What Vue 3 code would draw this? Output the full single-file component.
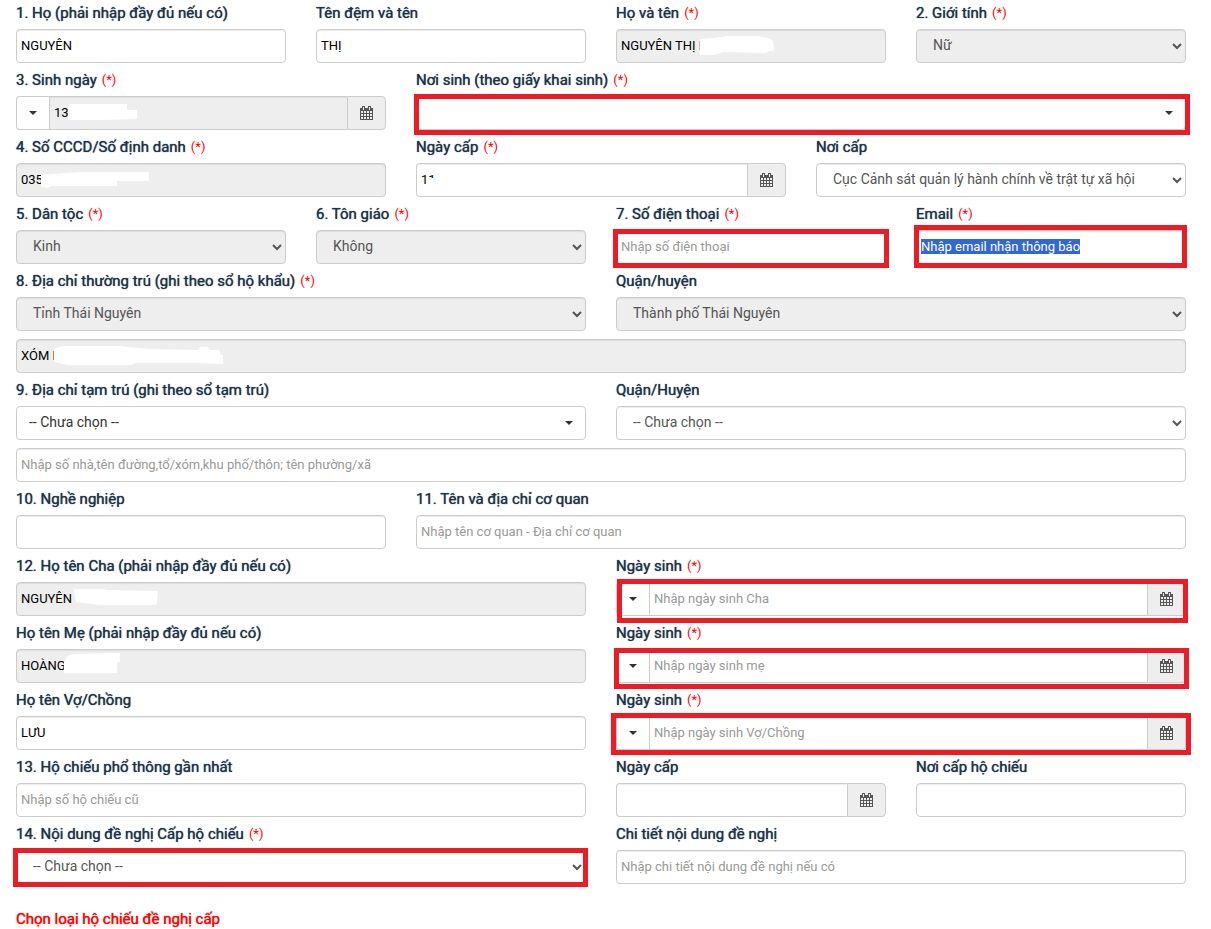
<template>
  <form class="passport-form" @submit.prevent>
    <div v-for="field in fields" :key="field.id" class="field" :class="'span-' + field.span">
      <label v-if="field.label" :for="field.id">
        {{ field.label }}<span v-if="field.required" class="required">(*)</span>
      </label>

      <div class="control">
        <select
          v-if="field.type === 'select'"
          :id="field.id"
          v-model="field.value"
          class="form-control"
          :disabled="field.disabled"
        >
          <option>{{ field.value }}</option>
        </select>

        <div v-else-if="field.type === 'picker'" class="picker">
          <select :id="field.id" v-model="field.value" class="form-control">
            <option>{{ field.value }}</option>
          </select>
          <span class="caret"></span>
        </div>

        <div v-else-if="field.type === 'date'" class="input-group">
          <button v-if="field.format" type="button" class="format-btn" aria-label="Định dạng ngày">
            <span class="caret"></span>
          </button>
          <input
            :id="field.id"
            v-model="field.value"
            type="text"
            class="form-control"
            :class="{ first: !field.format }"
            :placeholder="field.placeholder"
            :disabled="field.disabled"
          />
          <button type="button" class="addon" aria-label="Chọn ngày">
            <svg viewBox="0 0 13 14" width="13" height="14" fill-rule="evenodd">
              <path :d="calendar" />
            </svg>
          </button>
        </div>

        <input
          v-else
          :id="field.id"
          v-model="field.value"
          type="text"
          class="form-control"
          :placeholder="field.placeholder"
          :disabled="field.disabled"
          :aria-label="field.label ? undefined : field.aria"
        />

        <svg v-if="field.mask" class="mask" width="240" height="34" viewBox="0 0 240 34">
          <polygon :points="field.mask" />
        </svg>
        <span v-if="field.frame" class="frame" :class="'frame-' + field.frame"></span>
      </div>
    </div>

    <h2>Chọn loại hộ chiếu đề nghị cấp</h2>
  </form>
</template>

<script setup>
import { ref, onMounted } from 'vue';

// Outline with two rings, then three rows of four day cells
const calendar =
  'M0 2H2V0H5V2H8V0H11V2H13V14H0Z M3 1h1v3h-1z M9 1h1v3h-1z' +
  'M1 5h2v2h-2z M4 5h2v2h-2z M7 5h2v2h-2z M10 5h2v2h-2z' +
  'M1 8h2v2h-2z M4 8h2v2h-2z M7 8h2v2h-2z M10 8h2v2h-2z' +
  'M1 11h2v2h-2z M4 11h2v2h-2z M7 11h2v2h-2z M10 11h2v2h-2z';

// span = number of columns out of 12
const fields = ref([
  { id: 'ho', label: '1. Họ (phải nhập đầy đủ nếu có)', span: 3, value: 'NGUYÊN' },
  { id: 'ten', label: 'Tên đệm và tên', span: 3, value: 'THỊ' },
  { id: 'hoten', label: 'Họ và tên', required: true, span: 3, value: 'NGUYÊN THỊ H', disabled: true, mask: '84,10 98,9 112,7 142,7 152,9 157,12 158,21 148,24 108,23 98,26 84,26' },
  { id: 'gioitinh', label: '2. Giới tính', required: true, span: 3, type: 'select', value: 'Nữ', disabled: true },

  { id: 'ngaysinh', label: '3. Sinh ngày', required: true, span: 4, type: 'date', format: true, value: '13', disabled: true, mask: '52,10 54,8 111,8 111,14 121,14 121,23 86,24 52,24' },
  { id: 'noisinh', label: 'Nơi sinh (theo giấy khai sinh)', required: true, span: 8, type: 'picker', value: '', frame: 'birthplace' },

  { id: 'cccd', label: '4. Số CCCD/Số định danh', required: true, span: 4, value: '035', disabled: true, mask: '25,12 48,10 66,9 133,9 133,18 101,18 101,23 36,23 32,25 25,24' },
  { id: 'ngaycap', label: 'Ngày cấp', required: true, span: 4, type: 'date', value: '11', mask: '13,15 22,15 22,25 13,25' },
  { id: 'noicap', label: 'Nơi cấp', span: 4, type: 'select', value: 'Cục Cảnh sát quản lý hành chính về trật tự xã hội' },

  { id: 'dantoc', label: '5. Dân tộc', required: true, span: 3, type: 'select', value: 'Kinh', disabled: true },
  { id: 'tongiao', label: '6. Tôn giáo', required: true, span: 3, type: 'select', value: 'Không', disabled: true },
  { id: 'dienthoai', label: '7. Số điện thoại', required: true, span: 3, value: '', placeholder: 'Nhập số điện thoại', frame: 'phone' },
  { id: 'email', label: 'Email', required: true, span: 3, value: 'Nhập email nhận thông báo', frame: 'email' },

  { id: 'tinh', label: '8. Địa chỉ thường trú (ghi theo sổ hộ khẩu)', required: true, span: 6, type: 'select', value: 'Tỉnh Thái Nguyên', disabled: true },
  { id: 'huyen', label: 'Quận/huyện', span: 6, type: 'select', value: 'Thành phố Thái Nguyên', disabled: true },
  { id: 'thuongtru', aria: 'Địa chỉ thường trú', span: 12, value: 'XÓM H', disabled: true, mask: '38,10 46,7 102,7 134,10 183,11 184,8 192,8 193,11 203,11 205,16 207,16 207,25 180,24 121,24 115,26 52,26 38,23' },

  { id: 'tamtrutinh', label: '9. Địa chỉ tạm trú (ghi theo sổ tạm trú)', span: 6, type: 'picker', value: '-- Chưa chọn --' },
  { id: 'tamtruhuyen', label: 'Quận/Huyện', span: 6, type: 'select', value: '-- Chưa chọn --' },
  { id: 'tamtru', aria: 'Địa chỉ tạm trú', span: 12, value: '', placeholder: 'Nhập số nhà,tên đường,tổ/xóm,khu phố/thôn; tên phường/xã' },

  { id: 'nghe', label: '10. Nghề nghiệp', span: 4, value: '' },
  { id: 'coquan', label: '11. Tên và địa chỉ cơ quan', span: 8, value: '', placeholder: 'Nhập tên cơ quan - Địa chỉ cơ quan' },

  { id: 'cha', label: '12. Họ tên Cha (phải nhập đầy đủ nếu có)', span: 6, value: 'NGUYÊN', disabled: true, mask: '58,7 88,7 90,8 142,9 141,22 139,23 84,23 60,20' },
  { id: 'sinhcha', label: 'Ngày sinh', required: true, span: 6, type: 'date', format: true, value: '', placeholder: 'Nhập ngày sinh Cha', frame: 'father' },

  { id: 'me', label: 'Họ tên Mẹ (phải nhập đầy đủ nếu có)', span: 6, value: 'HOÀNG', disabled: true, mask: '48,13 51,7 58,5 104,4 104,13 101,13 101,24 48,24' },
  { id: 'sinhme', label: 'Ngày sinh', required: true, span: 6, type: 'date', format: true, value: '', placeholder: 'Nhập ngày sinh mẹ', frame: 'mother' },

  { id: 'vochong', label: 'Họ tên Vợ/Chồng', span: 6, value: 'LƯU' },
  { id: 'sinhvochong', label: 'Ngày sinh', required: true, span: 6, type: 'date', format: true, value: '', placeholder: 'Nhập ngày sinh Vợ/Chồng', frame: 'spouse' },

  { id: 'hochieu', label: '13. Hộ chiếu phổ thông gần nhất', span: 6, value: '', placeholder: 'Nhập số hộ chiếu cũ' },
  { id: 'caphochieu', label: 'Ngày cấp', span: 3, type: 'date', value: '' },
  { id: 'noicaphochieu', label: 'Nơi cấp hộ chiếu', span: 3, value: '' },

  { id: 'noidung', label: '14. Nội dung đề nghị Cấp hộ chiếu', required: true, span: 6, type: 'select', value: '-- Chưa chọn --', frame: 'request' },
  { id: 'chitiet', label: 'Chi tiết nội dung đề nghị', span: 6, value: '', placeholder: 'Nhập chi tiết nội dung đề nghị nếu có' },
]);

onMounted(() => {
  const email = document.getElementById('email');
  email.focus();
  email.select();
});
</script>

<style>
body {
  margin: 0;
  background: #fff;
}
</style>

<style scoped>
.passport-form {
  display: grid;
  grid-template-columns: repeat(12, minmax(0, 1fr));
  column-gap: 30px;
  padding: 3px 25px 0 16px;
  font-family: Roboto, "Noto Sans", sans-serif;
  font-size: 14px;
  line-height: 20px;
}

.span-3 { grid-column: span 3; }
.span-4 { grid-column: span 4; }
.span-6 { grid-column: span 6; }
.span-8 { grid-column: span 8; }
.span-12 { grid-column: span 12; }

.field {
  margin-bottom: 7px;
}

.span-12 {
  margin-top: 1px;
}

label {
  display: flex;
  align-items: center;
  height: 20px;
  margin-bottom: 6px;
  color: #1f3347;
  font-size: 15px;
  font-weight: 400;
  text-shadow: 0 0 1px currentColor;
  white-space: nowrap;
}

.required {
  margin-left: 5px;
  color: #f00;
  font-size: 13px;
  text-shadow: none;
}

.control,
.picker {
  position: relative;
}

.form-control {
  display: block;
  box-sizing: border-box;
  width: 100%;
  height: 34px;
  padding: 5px 4px 7px;
  border: 1px solid #ccc;
  border-radius: 4px;
  outline: none;
  background-color: #fff;
  box-shadow: inset 0 1px 1px rgba(0, 0, 0, 0.075);
  color: #000;
  font-family: inherit;
  font-size: 13px;
}

.form-control:disabled {
  background-color: #eee;
  opacity: 1;
}

.form-control::placeholder {
  color: #999;
}

.form-control::selection {
  background: #3367d1;
  color: #fff;
}

select.form-control {
  padding: 5px 12px 7px;
  color: #555;
  font-size: 14px;
}

.picker .form-control {
  appearance: none;
  box-shadow: none;
  color: #333;
}

.caret {
  border-top: 4px solid #333;
  border-right: 4px solid transparent;
  border-left: 4px solid transparent;
}

.picker .caret {
  position: absolute;
  top: 15px;
  right: 13px;
}

.input-group {
  display: flex;
}

.input-group .form-control {
  flex: 1;
  min-width: 0;
  border-right: 0;
  border-radius: 0;
}

.input-group .form-control.first {
  border-radius: 4px 0 0 4px;
}

.format-btn,
.addon {
  display: flex;
  align-items: center;
  justify-content: center;
  box-sizing: border-box;
  height: 34px;
  padding: 0;
  border: 1px solid #ccc;
}

.format-btn {
  width: 33px;
  border-right: 0;
  border-radius: 4px 0 0 4px;
  background: #fff;
}

.addon {
  width: 39px;
  border-radius: 0 4px 4px 0;
  background: #eee;
  fill: #555;
}

.mask {
  position: absolute;
  top: 0;
  left: 0;
  fill: #fff;
  pointer-events: none;
}

.frame {
  position: absolute;
  border: 5px solid #ed1c24;
  pointer-events: none;
}

.frame-birthplace { inset: -2px -4px -5px -2px; }
.frame-phone { inset: -1px -3px -4px -3px; }
.frame-email { inset: -5px -1px -4px -2px; }
.frame-father { inset: -3px -2px -7px 1px; }
.frame-mother { inset: -1px -3px -6px -2px; }
.frame-spouse { inset: -3px -5px -5px -5px; }
.frame-request { inset: -2px -2px -3px -3px; }

h2 {
  grid-column: span 12;
  margin: 18px 0 0;
  color: #f00;
  font-size: 15px;
  font-weight: 400;
  line-height: 20px;
  text-shadow: 0 0 1px currentColor;
}
</style>
